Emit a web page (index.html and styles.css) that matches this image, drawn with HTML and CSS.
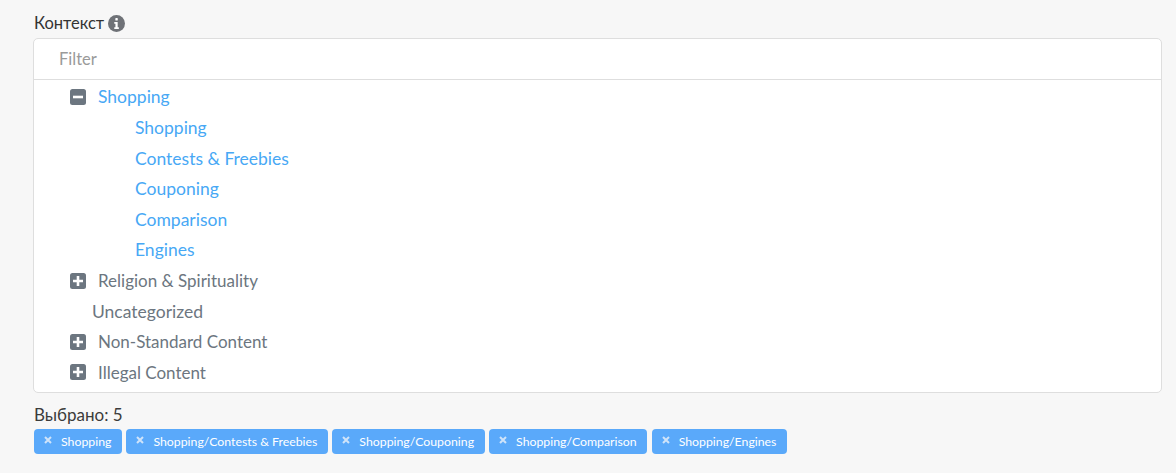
FILE: index.html
```
<!DOCTYPE html>
<html lang="ru">
<head>
<meta charset="utf-8">
<title>Контекст</title>
<link rel="stylesheet" href="styles.css">
</head>
<body>
<div class="page">
  <div class="heading">
    <span>Контекст</span>
    <svg class="info" viewBox="0 0 16 16" width="17" height="17"><circle cx="8" cy="8" r="8" fill="#6f7277"/><rect x="6.9" y="2.9" width="2.3" height="2.3" rx="0.6" fill="#fff"/><path d="M5.9 6.6h3.2v5h1.1v1.6H5.9v-1.6h1.1V8.2H5.9z" fill="#fff"/></svg>
  </div>
  <div class="panel">
    <div class="filter">Filter</div>
    <ul class="tree">
      <li class="row active"><svg class="toggle" viewBox="0 0 16 16" width="16" height="16"><rect width="16" height="16" rx="2.5" fill="#6c7680"/><rect x="3" y="6.7" width="10" height="2.6" fill="#fff"/></svg>Shopping</li>
      <li class="row child active">Shopping</li>
      <li class="row child active">Contests &amp; Freebies</li>
      <li class="row child active">Couponing</li>
      <li class="row child active">Comparison</li>
      <li class="row child active">Engines</li>
      <li class="row"><svg class="toggle" viewBox="0 0 16 16" width="16" height="16"><rect width="16" height="16" rx="2.5" fill="#6c7680"/><path d="M6.7 3h2.6v3.7H13v2.6H9.3V13H6.7V9.3H3V6.7h3.7z" fill="#fff"/></svg>Religion &amp; Spirituality</li>
      <li class="row leaf">Uncategorized</li>
      <li class="row"><svg class="toggle" viewBox="0 0 16 16" width="16" height="16"><rect width="16" height="16" rx="2.5" fill="#6c7680"/><path d="M6.7 3h2.6v3.7H13v2.6H9.3V13H6.7V9.3H3V6.7h3.7z" fill="#fff"/></svg>Non-Standard Content</li>
      <li class="row"><svg class="toggle" viewBox="0 0 16 16" width="16" height="16"><rect width="16" height="16" rx="2.5" fill="#6c7680"/><path d="M6.7 3h2.6v3.7H13v2.6H9.3V13H6.7V9.3H3V6.7h3.7z" fill="#fff"/></svg>Illegal Content</li>
    </ul>
  </div>
  <div class="count">Выбрано: 5</div>
  <div class="tags">
    <span class="tag"><svg class="x" viewBox="0 0 8 8" width="8" height="8"><path d="M1 1l6 6M7 1L1 7"/></svg>Shopping</span>
    <span class="tag"><svg class="x" viewBox="0 0 8 8" width="8" height="8"><path d="M1 1l6 6M7 1L1 7"/></svg>Shopping/Contests &amp; Freebies</span>
    <span class="tag"><svg class="x" viewBox="0 0 8 8" width="8" height="8"><path d="M1 1l6 6M7 1L1 7"/></svg>Shopping/Couponing</span>
    <span class="tag"><svg class="x" viewBox="0 0 8 8" width="8" height="8"><path d="M1 1l6 6M7 1L1 7"/></svg>Shopping/Comparison</span>
    <span class="tag"><svg class="x" viewBox="0 0 8 8" width="8" height="8"><path d="M1 1l6 6M7 1L1 7"/></svg>Shopping/Engines</span>
  </div>
</div>
</body>
</html>
```
FILE: styles.css
```
* { box-sizing: border-box; }
html, body { margin: 0; height: 100%; }
body { background: #f7f7f7; font-family: "Lato", "Liberation Sans", sans-serif; color: #3b3b3b; overflow: hidden; }
.page { padding: 13px 14px 0 33px; }
.heading { display: flex; align-items: center; gap: 4px; height: 20px; margin-bottom: 5px; font-size: 16.5px; color: #333; padding-left: 1px; }
.info { display: block; }
.panel { background: #fff; border: 1px solid #dedede; border-radius: 5px; height: 355px; overflow: hidden; }
.filter { height: 41px; line-height: 40px; padding-left: 25px; font-size: 16.5px; color: #9a9a9a; border-bottom: 1px solid #dedede; }
.tree { list-style: none; margin: 0; padding: 1.7px 0 0 36px; }
.row { display: flex; align-items: center; height: 30.6px; font-size: 17px; color: #6c7680; }
.toggle { margin-right: 12px; flex: none; }
.active { color: #47a8f5; font-size: 17.5px; }
.child { padding-left: 65px; }
.leaf { padding-left: 22px; font-size: 17.5px; }
.count { font-size: 17px; margin-top: 12px; height: 20px; line-height: 20px; padding-left: 1px; }
.tags { display: flex; gap: 4.5px; margin-top: 4px; padding-left: 1px; }
.tag { display: flex; align-items: center; height: 25px; padding: 0 10.5px 0 10px; background: #5aa9fa; border-radius: 4px; color: #fff; font-size: 12.3px; white-space: nowrap; }
.x { flex: none; margin-right: 9px; position: relative; top: -2px; fill: none; stroke: #cfe3f9; stroke-width: 2; }
```
